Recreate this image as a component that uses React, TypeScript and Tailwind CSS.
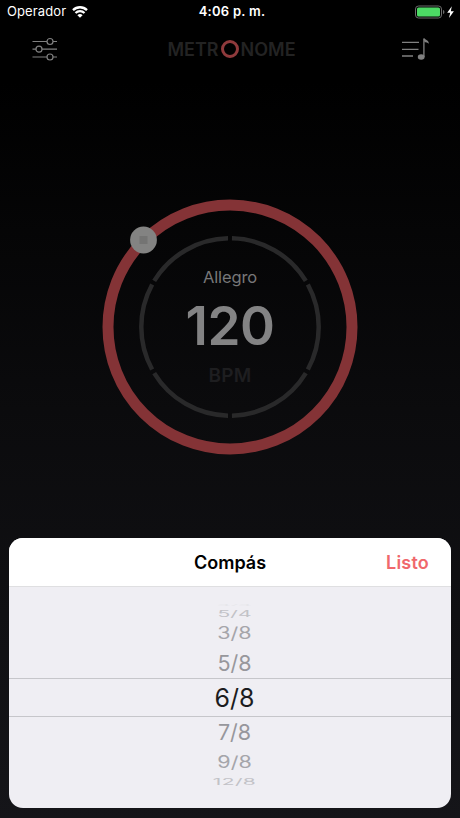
import React from 'react';
import { clsx } from 'clsx';

interface PickerRow {
  label: string;
  rowClass: string;
  textClass: string;
}

const pickerRows: PickerRow[] = [
  { label: '4/4', rowClass: 'h-[4px] mt-[16px]', textClass: 'text-[21px] text-[#e6e6ea] scale-y-[0.1]' },
  { label: '5/4', rowClass: 'h-[13px]', textClass: 'text-[21px] text-[#c2c2c7] scale-y-[0.44]' },
  { label: '3/8', rowClass: 'h-[28px]', textClass: 'text-[21.5px] text-[#a5a5aa] scale-y-[0.78]' },
  { label: '5/8', rowClass: 'h-[30px] pt-px', textClass: 'text-[21.5px] text-[#97979c]' },
  { label: '6/8', rowClass: 'h-[39px] pt-[2px] border-y border-[#c6c6ca]', textClass: 'text-[25px] text-[#1c1c20]' },
  { label: '7/8', rowClass: 'h-[32px]', textClass: 'text-[21.5px] text-[#97979c]' },
  { label: '9/8', rowClass: 'h-[27px]', textClass: 'text-[21.5px] text-[#a5a5aa] scale-y-[0.78]' },
  { label: '12/8', rowClass: 'h-[11px]', textClass: 'text-[21px] text-[#c2c2c7] scale-y-[0.44] tracking-[0.4px]' },
];

const StatusBar: React.FC = () => (
  <div className="relative flex h-6 items-center justify-between pl-[7px] pr-[5px] text-[13px] text-white">
    <div className="flex items-center gap-[6px]">
      <span className="tracking-[0.1px]">Operador</span>
      <svg width="16" height="12" viewBox="0 0 16 12" fill="none" stroke="white" strokeWidth="2.3">
        <path d="M1 4.100a10 10 0 0 1 14 0" />
        <path d="M3.500 7a6.400 6.400 0 0 1 9 0" />
        <path d="M8 11.700L5.400 9.200a3.800 3.800 0 0 1 5.200 0z" fill="white" stroke="none" />
      </svg>
    </div>
    <div className="absolute inset-x-0 pl-[4px] text-center font-semibold tracking-[0.25px]">4:06 p. m.</div>
    <svg width="40" height="14" viewBox="0 0 40 14">
      <rect x="0.5" y="1" width="26" height="12" rx="3" fill="none" stroke="#6b6b6b" />
      <rect x="2" y="2.5" width="23" height="9" rx="1.6" fill="#4cd964" />
      <path d="M28 5v4c1-.3 1.400-1 1.400-2s-.4-1.700-1.400-2z" fill="#6b6b6b" />
      <path d="M36.800 1.200L32.200 7.800h3L34 12.900 38.900 6.200h-3.100z" fill="white" />
    </svg>
  </div>
);

const NavBar: React.FC = () => (
  <div className="flex h-[50px] items-center justify-between pl-[32px] pr-[30px]">
    <svg width="25" height="24" viewBox="0 0 25 24" fill="none" stroke="#808080" strokeWidth="1.2">
      <path d="M.5 4.500h14.500M21 4.500H25M.5 12.200h3.500M10 12.200H25M.5 20h14.500M21 20H25" />
      <circle cx="18" cy="4.5" r="3" />
      <circle cx="7" cy="12.2" r="3" />
      <circle cx="18" cy="20" r="3" />
    </svg>
    <div className="flex items-center pl-[4px] text-[18px] font-semibold text-[#232323]">
      <span>METR</span>
      <span className="mx-[2px] size-[18px] rounded-full border-[3px] border-[#8f3a3c]" />
      <span>NOME</span>
    </div>
    <svg width="28" height="24" viewBox="0 0 28 24" fill="none" stroke="#808080" strokeWidth="1.3">
      <path d="M0 5.300h17M0 12.300h16.500M0 19h11" />
      <path d="M21.900 20V2" />
      <path d="M21.300 1.300h1.300c.4 2 4.300 1.300 4.300 5.500-1.300-1.500-3-1.500-4.300-1.500z" fill="#808080" stroke="none" />
      <ellipse cx="19.2" cy="20" rx="3.4" ry="2.8" fill="#808080" stroke="none" />
    </svg>
  </div>
);

const Dial: React.FC = () => (
  <div className="relative mx-auto mt-[125px] size-[256px]">
    <svg className="absolute inset-0" width="256" height="256" viewBox="0 0 256 256" fill="none">
      <circle cx="128" cy="128" r="122" stroke="#843336" strokeWidth="11" />
      {/* six beats, 4px apart */}
      <circle
        cx="128"
        cy="128"
        r="88.7"
        pathLength="360"
        stroke="#29292a"
        strokeWidth="4.5"
        strokeDasharray="57.4 2.6"
        strokeDashoffset="-1.3"
        transform="rotate(-90 128 128)"
      />
      <circle cx="41.5" cy="41" r="13.4" fill="#838382" />
      <rect x="37.5" y="37" width="8" height="8" fill="#747473" />
    </svg>
    <div className="relative flex flex-col items-center pt-[67px]">
      <span className="text-[16.5px] leading-[22px] tracking-[-0.1px] text-[#777778]">Allegro</span>
      <span className="mt-[8px] text-[53px] leading-[60px] font-semibold tracking-[-0.5px] text-[#838384]">120</span>
      <span className="mt-[8px] text-[19px] leading-[24px] font-semibold tracking-[0.3px] text-[#1e1e20]">BPM</span>
    </div>
  </div>
);

const TimeSignatureSheet: React.FC = () => (
  <div className="mx-[9px] mb-[10px] mt-auto h-[270px] overflow-hidden rounded-[14px] bg-[#efeef3]">
    <div className="grid h-[49px] grid-cols-3 items-center border-b border-[#dfdfe1] bg-white text-[18px] font-semibold">
      <span />
      <span className="text-center text-black">Compás</span>
      <button className="pr-[22px] text-right tracking-[0.2px] text-[#f0686c]">Listo</button>
    </div>
    <div>
      {pickerRows.map(row => (
        <div key={row.label} className={clsx('flex items-center justify-center pl-[9px]', row.rowClass)}>
          <span className={clsx('leading-none', row.textClass)}>{row.label}</span>
        </div>
      ))}
    </div>
  </div>
);

export default function App() {
  return (
    <div className="flex h-[818px] w-[460px] flex-col overflow-hidden bg-linear-to-b/srgb from-black from-10% via-[#0b0b0d] via-50% to-[#151519] font-['Inter','Liberation_Sans',sans-serif]">
      <StatusBar />
      <NavBar />
      <Dial />
      <TimeSignatureSheet />
    </div>
  );
}
